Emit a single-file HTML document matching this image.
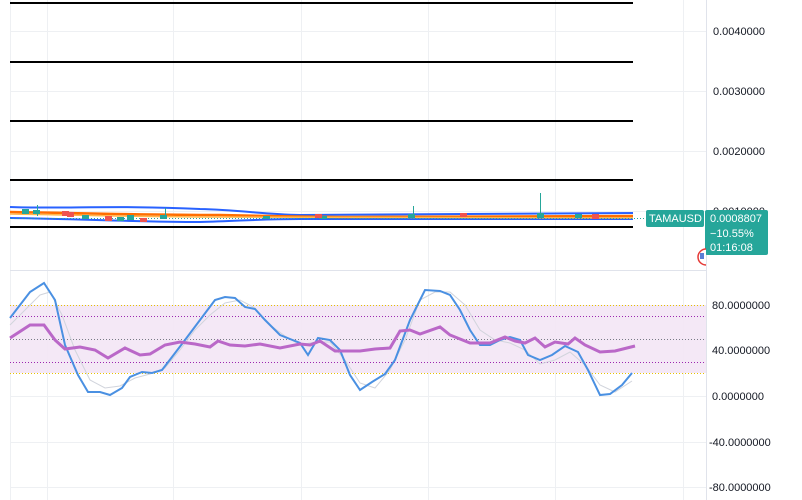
<!DOCTYPE html>
<html><head><meta charset="utf-8"><style>
html,body{margin:0;padding:0;background:#fff;width:802px;height:500px;overflow:hidden;font-family:"Liberation Sans",sans-serif}
svg{position:absolute;left:0;top:0}
text{font-family:"Liberation Sans",sans-serif;font-size:11px;fill:#131722}
</style></head><body>
<svg width="802" height="500" viewBox="0 0 802 500">
<defs><clipPath id="c"><rect x="0" y="0" width="706" height="500"/></clipPath></defs>
<g stroke="#eef0f3" stroke-width="1">
<line x1="10.5" y1="0" x2="10.5" y2="500"/>
<line x1="47.5" y1="0" x2="47.5" y2="500"/>
<line x1="173.5" y1="0" x2="173.5" y2="500"/>
<line x1="301.5" y1="0" x2="301.5" y2="500"/>
<line x1="428.5" y1="0" x2="428.5" y2="500"/>
<line x1="555.5" y1="0" x2="555.5" y2="500"/>
<line x1="683.5" y1="0" x2="683.5" y2="500"/>
<line x1="10" y1="31.5" x2="706" y2="31.5"/>
<line x1="10" y1="91.5" x2="706" y2="91.5"/>
<line x1="10" y1="151.5" x2="706" y2="151.5"/>
<line x1="10" y1="211.5" x2="706" y2="211.5"/>
<line x1="10" y1="396.5" x2="706" y2="396.5"/>
<line x1="10" y1="442.5" x2="706" y2="442.5"/>
<line x1="10" y1="487.5" x2="706" y2="487.5"/>
</g>
<line x1="10" y1="270.5" x2="706" y2="270.5" stroke="#e0e3eb"/>
<line x1="706.5" y1="0" x2="706.5" y2="500" stroke="#e0e3eb"/>
<g stroke="#000" stroke-width="2">
<line x1="10" y1="3" x2="633" y2="3"/>
<line x1="10" y1="62" x2="633" y2="62"/>
<line x1="10" y1="121" x2="633" y2="121"/>
<line x1="10" y1="180" x2="633" y2="180"/>
<line x1="10" y1="227" x2="633" y2="227"/>
</g>
<path d="M10,207 C60,209 120,205 200,209 C240,210 260,214 300,215 L633,213" stroke="#2962ff" stroke-width="2" fill="none"/>
<path d="M10,218 C80,219 140,222 200,222 C240,221 260,219 300,219 L633,219" stroke="#2962ff" stroke-width="2" fill="none"/>
<path d="M10,212 C80,213 140,215 220,215 C260,216 300,217 350,217 L633,216" stroke="#ff6d00" stroke-width="2.5" fill="none"/>
<path d="M10,214 C80,215 140,217 220,217 L633,218" stroke="#ffb74d" stroke-width="1.5" fill="none"/>
<line x1="10" y1="218.5" x2="646" y2="218.5" stroke="#26a69a" stroke-dasharray="1 2"/>
<g fill="#26a69a">
<rect x="22" y="209" width="7" height="5"/><rect x="33" y="210" width="7" height="4"/>
<rect x="82" y="215" width="7" height="4"/><rect x="117" y="217" width="7" height="4"/>
<rect x="127" y="215" width="7" height="5"/><rect x="160" y="215" width="7" height="4"/>
<rect x="263" y="216" width="7" height="3"/><rect x="320" y="216" width="7" height="3"/>
<rect x="408" y="214" width="7" height="4"/><rect x="537" y="213" width="7" height="5"/>
<rect x="575" y="214" width="7" height="4"/>
<rect x="37" y="205" width="1" height="11"/><rect x="413" y="206" width="1" height="10"/>
<rect x="540" y="193" width="1" height="22"/><rect x="165" y="208" width="1" height="9"/>
</g>
<g fill="#ef5350">
<rect x="62" y="211" width="7" height="5"/><rect x="67" y="212" width="7" height="5"/>
<rect x="105" y="216" width="7" height="5"/><rect x="140" y="218" width="7" height="4"/>
<rect x="315" y="214" width="7" height="4"/><rect x="460" y="213" width="7" height="4"/>
<rect x="592" y="214" width="7" height="5"/>
</g>
<rect x="10" y="305" width="696" height="68" fill="#f3e5f5" opacity="0.9"/>
<g stroke-dasharray="1 2" stroke-width="1">
<line x1="10" y1="305.5" x2="706" y2="305.5" stroke="#e6c200"/>
<line x1="10" y1="373.5" x2="706" y2="373.5" stroke="#e6c200"/>
<line x1="10" y1="316.5" x2="706" y2="316.5" stroke="#9c27b0"/>
<line x1="10" y1="362.5" x2="706" y2="362.5" stroke="#9c27b0"/>
<line x1="10" y1="339.5" x2="706" y2="339.5" stroke="#787b86"/>
</g>
<polyline fill="none" stroke="#d1d4dc" stroke-width="1" points="10,325 25,310 40,295 50,292 62,315 75,350 90,380 105,388 120,386 135,378 150,374 165,368 180,350 195,330 210,315 225,303 240,300 255,308 270,325 285,336 300,345 315,342 330,342 345,360 360,383 375,388 390,370 405,340 420,300 435,292 450,292 465,305 480,330 495,340 510,343 525,350 540,364 555,360 570,352 585,365 600,385 615,392 632,381"/>
<polyline fill="none" stroke="#4a90e2" stroke-width="2" points="10,318 20,305 30,292 44,283 55,300 65,345 78,375 88,392 100,392 110,395 122,388 130,377 142,372 152,373 162,370 172,357 185,340 200,320 215,300 225,297 235,298 245,307 255,309 265,320 280,335 290,339 300,343 308,355 318,338 330,340 340,350 350,375 360,390 372,382 385,374 395,360 410,320 425,290 440,291 450,295 460,310 470,330 480,345 490,345 500,340 510,337 520,340 528,355 540,360 552,355 565,346 578,352 588,370 600,395 610,394 622,385 632,373"/>
<polyline fill="none" stroke="#ba68c8" stroke-width="3" points="10,338 30,325 44,325 55,340 65,349 80,347 95,350 108,358 125,348 140,355 150,354 165,345 180,342 195,344 210,347 218,341 230,345 245,346 260,344 280,348 300,344 310,345 320,341 335,351 360,351 375,349 390,348 400,331 410,330 420,334 440,327 450,335 470,343 490,343 505,337 515,341 525,343 535,338 545,347 555,342 568,344 575,338 585,345 600,352 615,351 635,346"/>
<text x="713" y="35">0.0040000</text>
<text x="713" y="95">0.0030000</text>
<text x="713" y="155">0.0020000</text>
<text x="713" y="215">0.0010000</text>
<text x="712" y="309">80.0000000</text>
<text x="712" y="354">40.0000000</text>
<text x="712" y="400">0.0000000</text>
<text x="709" y="446">-40.0000000</text>
<text x="709" y="491">-80.0000000</text>
<rect x="646" y="210" width="58" height="17" rx="2" fill="#26a69a"/>
<text x="649" y="222" style="fill:#fff">TAMAUSD</text>
<rect x="705" y="210" width="63" height="45" rx="2" fill="#26a69a"/>
<text x="710" y="222" style="fill:#fff">0.0008807</text>
<text x="710" y="237" style="fill:#fff">−10.55%</text>
<text x="710" y="251" style="fill:#fff">01:16:08</text>
<g clip-path="url(#c)">
<circle cx="706" cy="257" r="8" fill="#fff" stroke="#e53935" stroke-width="1.5"/>
<rect x="700" y="253" width="4" height="6" fill="#5b7fd6"/>
</g>
</svg>
</body></html>
